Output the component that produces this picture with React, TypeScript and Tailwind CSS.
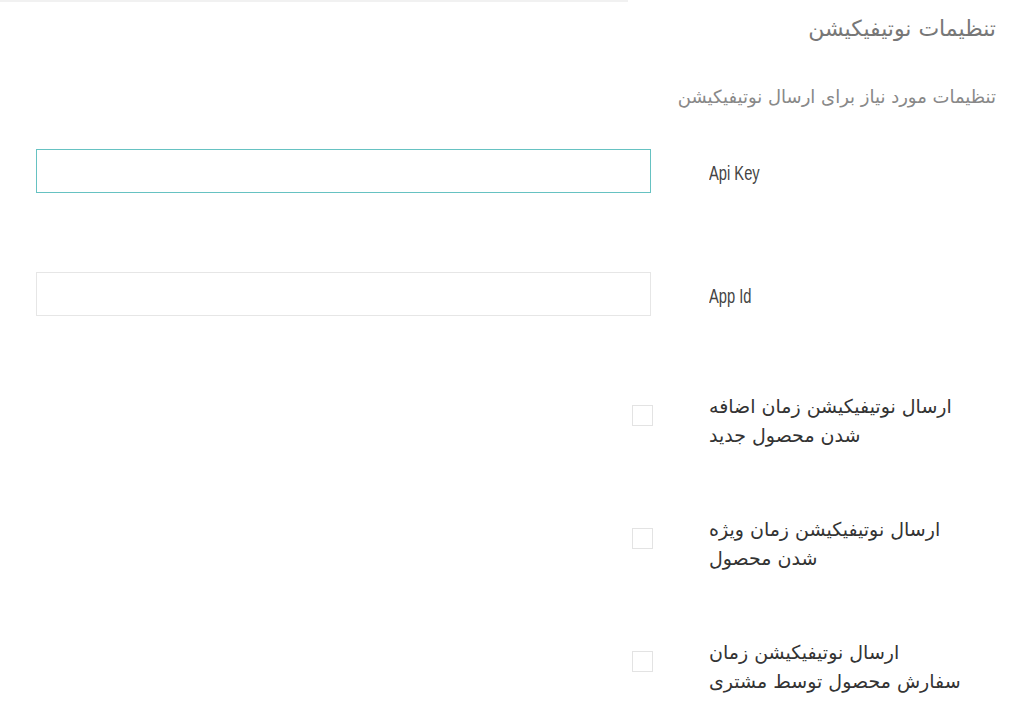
import { useState } from "react";

const rows = [
  ["ارسال نوتیفیکیشن زمان اضافه", "شدن محصول جدید"],
  ["ارسال نوتیفیکیشن زمان ویژه", "شدن محصول"],
  ["ارسال نوتیفیکیشن زمان", "سفارش محصول توسط مشتری"],
];

export default function App() {
  const [checked, setChecked] = useState([false, false, false]);
  const fa = { fontFamily: '"DejaVu Sans", "Noto Sans", sans-serif' };
  const en = { fontFamily: '"Liberation Sans", Arial, sans-serif' };

  return (
    <div dir="rtl" className="min-h-[710px] w-full bg-white" style={fa}>
      <div className="mr-auto h-[2px] w-[628px] bg-[#f1f1f1]" />
      <div className="pr-[22px] pl-[36px]">
        <h2 className="pt-[13px] text-[22px] leading-[28px] font-normal text-[#777]">
          تنظیمات نوتیفیکیشن
        </h2>
        <p className="mt-[41px] text-[18px] leading-[26px] text-[#888]">
          تنظیمات مورد نیاز برای ارسال نوتیفیکیشن
        </p>

        <div className="mt-[39px] flex flex-col">
          <div className="flex h-[44px] items-center gap-[58px]">
            <label className="w-[287px] pt-[3px] text-left" dir="ltr">
              <span className="inline-block origin-left scale-x-[0.7] text-[21px] text-[#444]" style={en}>
                Api Key
              </span>
            </label>
            <input
              type="text"
              className="h-[44px] w-[615px] border border-[#66c2c2] bg-white px-3 outline-none"
            />
          </div>

          <div className="mt-[79px] flex h-[44px] items-center gap-[58px]">
            <label className="w-[287px] pt-[3px] text-left" dir="ltr">
              <span className="inline-block origin-left scale-x-[0.7] text-[21px] text-[#444]" style={en}>
                App Id
              </span>
            </label>
            <input
              type="text"
              className="h-[44px] w-[615px] border border-[#e6e6e6] bg-white px-3 outline-none"
            />
          </div>

          {rows.map((lines, i) => (
            <div
              key={i}
              className={`flex items-start gap-[56px] ${i === 0 ? "mt-[76px]" : "mt-[65px]"}`}
            >
              <div className="w-[287px] text-left text-[19px] leading-[29px] text-[#333]">
                {lines.map((l) => (
                  <span key={l} className="block whitespace-nowrap">
                    {l}
                  </span>
                ))}
              </div>
              <div className="w-[615px] pt-[13px]">
                <button
                  type="button"
                  onClick={() =>
                    setChecked((c) => c.map((v, j) => (j === i ? !v : v)))
                  }
                  className="block h-[21px] w-[21px] border border-[#e3e3e3] bg-white"
                >
                  {checked[i] && (
                    <span className="block text-[12px] leading-[19px] text-[#66c2c2]">✓</span>
                  )}
                </button>
              </div>
            </div>
          ))}
        </div>
      </div>
    </div>
  );
}
